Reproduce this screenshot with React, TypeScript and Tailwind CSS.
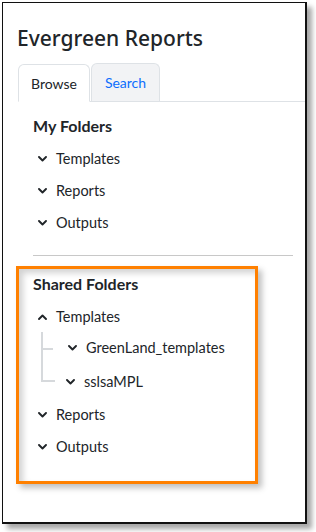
const font = { fontFamily: 'Lato, "Liberation Sans", sans-serif' };
const titleFont = { fontFamily: '"Noto Sans", "Liberation Sans", sans-serif' };

const Chevron = ({ up = false }: { up?: boolean }) => (
  <svg width="9" height="6" viewBox="0 0 9 6" className="shrink-0">
    <path
      d={up ? 'M1 5 L4.5 1.5 L8 5' : 'M1 1 L4.5 4.5 L8 1'}
      fill="none"
      stroke="#212529"
      strokeWidth="1.9"
      strokeLinecap="round"
      strokeLinejoin="round"
    />
  </svg>
);

const FolderRow = ({ label, up = false }: { label: string; up?: boolean }) => (
  <div className="flex items-center h-8 pl-[5px] gap-[9px] text-[14.5px] text-[#212529]">
    <Chevron up={up} />
    <span>{label}</span>
  </div>
);

export default function App() {
  return (
    <div className="w-[316px] h-[532px] bg-white pt-[2px] pl-[2px]" style={font}>
      <div className="w-[305px] h-[522px] bg-white border-l border-t border-r-2 border-b-2 border-[#111] shadow-[5px_5px_5px_rgba(0,0,0,0.35)] flex flex-col">
        <h1 className="pl-[14px] pt-[20px] text-[21px] leading-[30px] font-medium text-[#212529]" style={titleFont}>
          Evergreen Reports
        </h1>

        <div className="mt-[10px] ml-[15px] flex items-end border-b border-[#dee2e6]">
          <div className="w-[72px] h-[38px] -mb-px bg-white border border-[#dee2e6] border-b-white rounded-t-[6px] flex items-center justify-center text-[14px] text-[#212529]">
            Browse
          </div>
          <div className="ml-px w-[69px] h-[38px] bg-[#f2f3f5] border border-[#dee2e6] border-b-0 rounded-t-[6px] flex items-center justify-center text-[14px] text-[#0d6efd]">
            Search
          </div>
        </div>

        <div className="pl-[30px] pr-[12px] pt-[13px]">
          <h2 className="text-[16px] leading-[22px] font-bold text-[#212529]">My Folders</h2>
          <div className="mt-[6px]">
            <FolderRow label="Templates" />
            <FolderRow label="Reports" />
            <FolderRow label="Outputs" />
          </div>
          <div className="mt-[16px] border-t border-[#c8c8c8]" />

          <div className="mt-[10px] -ml-[17px] w-[242px] h-[218px] border-[3px] border-[#ff8000] shadow-[4px_4px_6px_rgba(0,0,0,0.25),inset_4px_4px_6px_rgba(0,0,0,0.18)] pl-[14px] pt-[4px]">
            <h2 className="text-[16px] leading-[22px] font-bold text-[#212529]">Shared Folders</h2>
            <div className="mt-[6px]">
              <FolderRow label="Templates" up />
              <div className="relative -mt-px pl-[30px]">
                <div className="absolute left-[8px] top-0 w-[2px] h-[50px] bg-[#d6d9dc]" />
                <div className="absolute left-[8px] top-[16px] w-[12px] h-[2px] bg-[#d6d9dc]" />
                <div className="absolute left-[8px] top-[48px] w-[14px] h-[2px] bg-[#d6d9dc]" />
                <FolderRow label="GreenLand_templates" />
                <div className="-ml-[2px] mt-[2px]">
                  <FolderRow label="sslsaMPL" />
                </div>
              </div>
              <div className="mt-[1px]">
                <FolderRow label="Reports" />
                <FolderRow label="Outputs" />
              </div>
            </div>
          </div>
        </div>
      </div>
    </div>
  );
}
